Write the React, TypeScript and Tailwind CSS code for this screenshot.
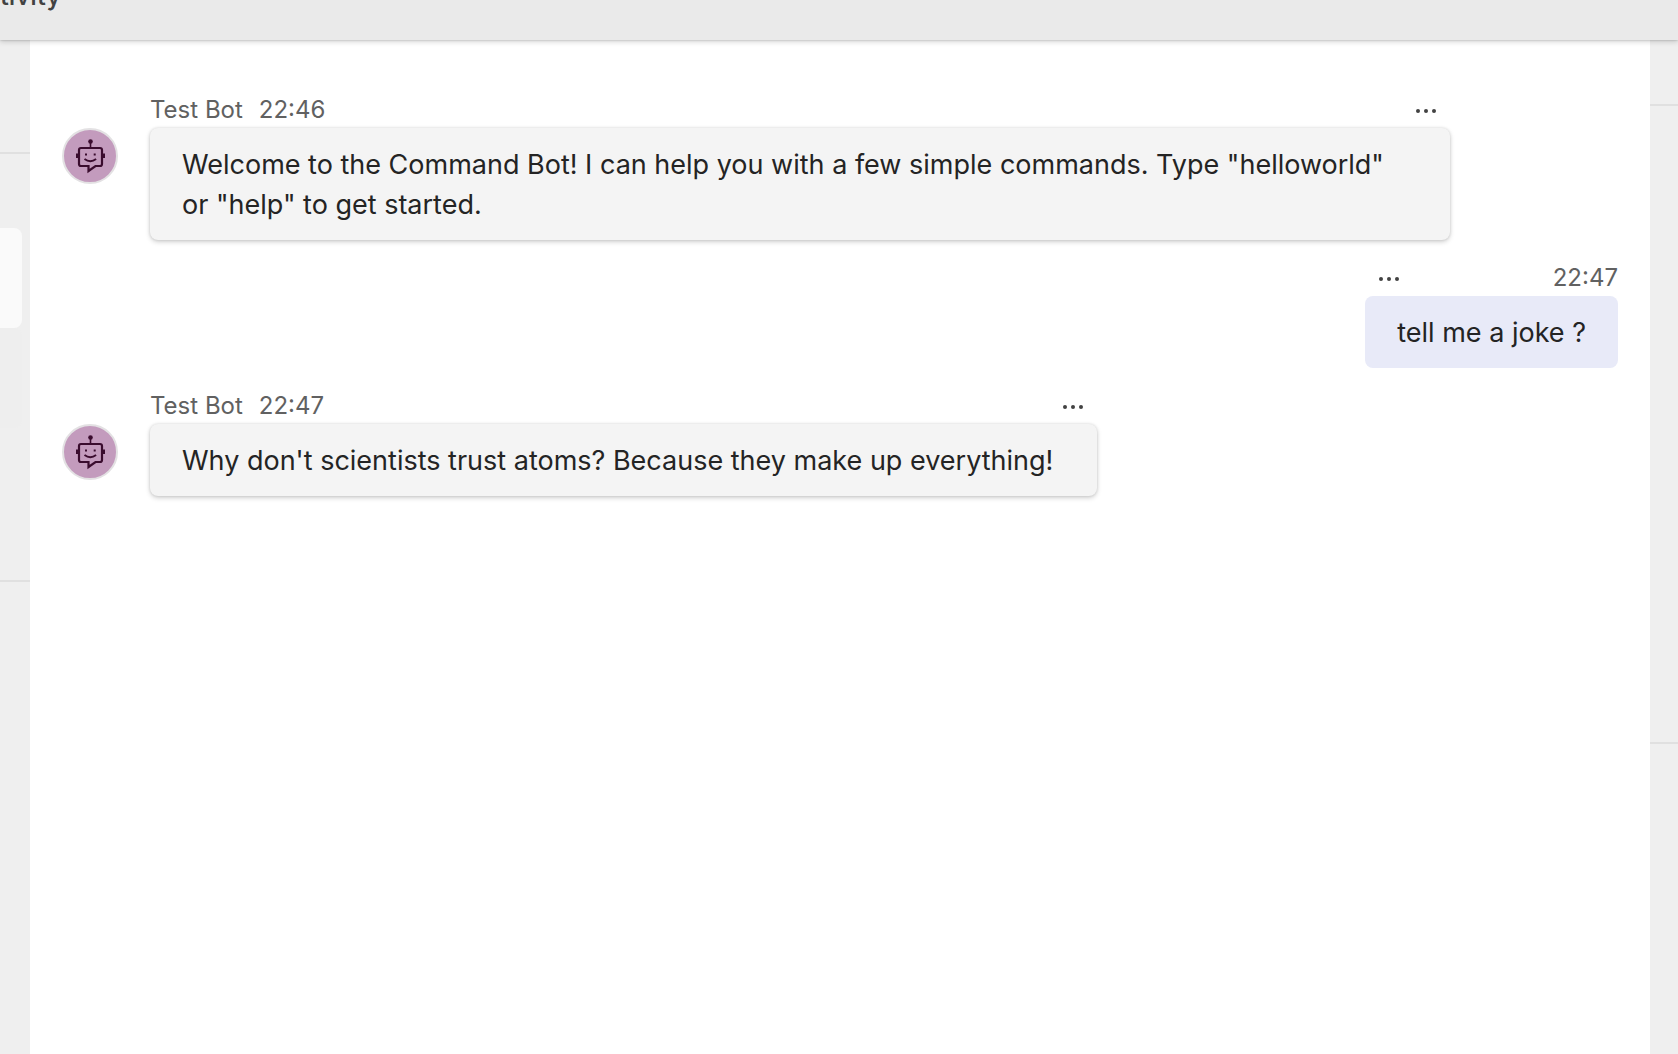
import type { ReactNode } from "react";

function BotAvatar() {
  return (
    <div className="mt-8 flex size-14 shrink-0 items-center justify-center rounded-full border-2 border-[#e3e1e3] bg-[#c39bbd]">
      <svg width="52" height="52" viewBox="0 0 52 52" fill="none" role="img" aria-label="Test Bot">
        <circle cx="26.5" cy="11.5" r="2.3" fill="#3a0c2e" />
        <path d="M26.500 12v6" stroke="#3a0c2e" strokeWidth="1.6" />
        <path
          d="M17 18h19q2 0 2 2v14q0 2-2 2h-4.500l-7 5v-5H17q-2 0-2-2V20q0-2 2-2z"
          stroke="#3a0c2e"
          strokeWidth="2.2"
        />
        <path d="M12 23.500h2.500v4.500H12zM38.500 23.500H41v4.500h-2.500z" fill="#3a0c2e" />
        <rect x="21" y="23.500" width="2" height="2" fill="#3a0c2e" />
        <rect x="29.700" y="23.500" width="2" height="2" fill="#3a0c2e" />
        <path d="M20.500 29q5.800 4.400 11.600 0" stroke="#3a0c2e" strokeWidth="1.900" />
      </svg>
    </div>
  );
}

function MoreButton() {
  return (
    <button type="button" aria-label="More options" className="flex h-7 items-center px-3.5 pt-0.5 text-[#424242]">
      <svg width="20" height="4" viewBox="0 0 20 4" fill="currentColor" aria-hidden="true">
        <circle cx="2" cy="2" r="2" />
        <circle cx="10" cy="2" r="2" />
        <circle cx="18" cy="2" r="2" />
      </svg>
    </button>
  );
}

function BotMessage({ time, children }: { time: string; children: ReactNode }) {
  return (
    <article className="flex items-start gap-8">
      <BotAvatar />
      <div className="max-w-[1300px] min-w-0">
        <div className="flex items-center justify-between pb-1 text-2xl leading-7 text-[#616161]">
          <div className="flex gap-4">
            <span>Test Bot</span>
            <time>{time}</time>
          </div>
          <MoreButton />
        </div>
        <p className="rounded-lg bg-[#f4f4f4] pt-[17px] pr-11 pb-[15px] pl-8 shadow-[0_2px_5px_rgba(0,0,0,0.18),0_0_3px_rgba(0,0,0,0.12)]">
          {children}
        </p>
      </div>
    </article>
  );
}

function UserMessage({ time, children }: { time: string; children: ReactNode }) {
  return (
    <article className="self-end">
      <div className="flex items-center justify-between pb-1 text-2xl leading-7 text-[#616161]">
        <MoreButton />
        <time>{time}</time>
      </div>
      <p className="rounded-lg bg-[#e8eaf8] px-8 pt-[17px] pb-[15px]">{children}</p>
    </article>
  );
}

export default function App() {
  return (
    <div className="flex h-screen flex-col overflow-hidden bg-[#efefef] font-['Inter',sans-serif] text-[27px] leading-10 text-[#242424]">
      <header className="z-10 h-10 shrink-0 bg-[#eaeaea] shadow-[0_0_2px_rgba(0,0,0,0.24),0_2px_5px_rgba(0,0,0,0.16)]">
        <h1 className="-mt-5 text-[26px] leading-8 font-medium text-[#424242]">tivity</h1>
      </header>
      <div className="flex min-h-0 flex-1">
        <aside className="w-[30px] shrink-0">
          <div className="h-[114px] border-b-2 border-[#e0e0e0]" />
          <div className="h-[428px] border-b-2 border-[#e0e0e0] pt-[74px] pr-2">
            <div className="h-[100px] rounded-r-lg bg-[#fafafa]" />
            <div className="h-[100px] rounded-r-lg bg-[#eeeeee]" />
          </div>
        </aside>
        <main className="flex min-w-0 flex-1 flex-col gap-6 bg-white px-8 pt-14">
          <BotMessage time="22:46">
            Welcome to the Command Bot! I can help you with a few simple commands. Type "helloworld" or "help" to get
            started.
          </BotMessage>
          <UserMessage time="22:47">tell me a joke ?</UserMessage>
          <BotMessage time="22:47">Why don't scientists trust atoms? Because they make up everything!</BotMessage>
        </main>
        <aside className="w-7 shrink-0">
          <div className="h-[66px] border-b-2 border-[#e0e0e0]" />
          <div className="h-[638px] border-b-2 border-[#e0e0e0]" />
        </aside>
      </div>
    </div>
  );
}
